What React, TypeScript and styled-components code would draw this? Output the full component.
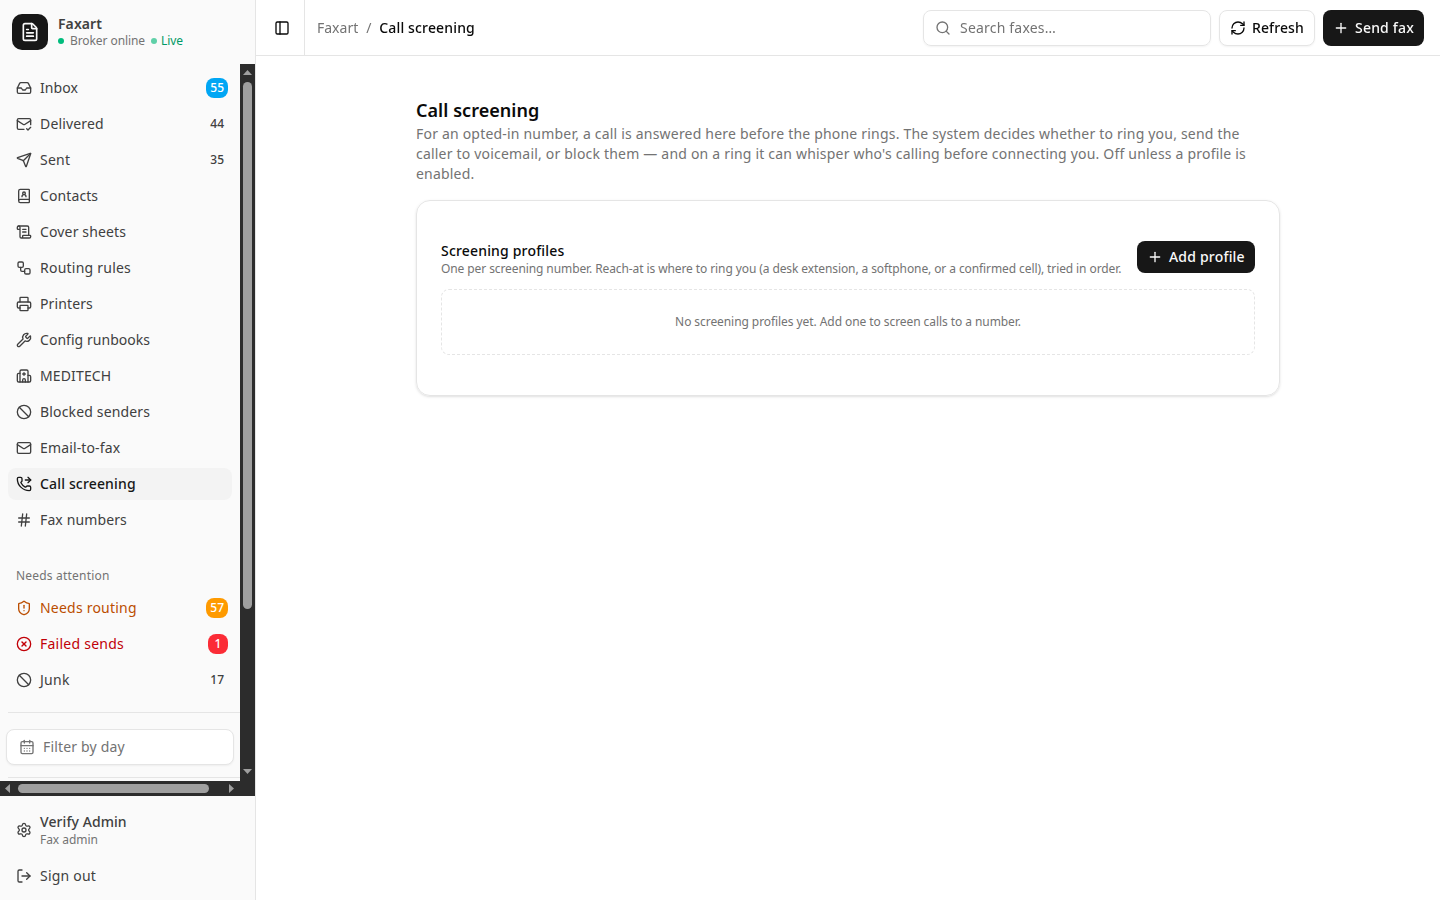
import React from "react";
import styled, { createGlobalStyle, css } from "styled-components";
import {
  Ban,
  BookUser,
  CalendarDays,
  CircleX,
  FileText,
  Hash,
  Hospital,
  Inbox,
  LogOut,
  Mail,
  MailCheck,
  PanelLeft,
  PhoneForwarded,
  Plus,
  Printer,
  RefreshCw,
  ScrollText,
  Search,
  Send,
  Settings,
  ShieldAlert,
  Workflow,
  Wrench,
  type LucideIcon,
} from "lucide-react";

const GlobalStyle = createGlobalStyle`
  *, *::before, *::after { box-sizing: border-box; }
  body {
    margin: 0;
    background: #fff;
    color: #0a0a0a;
    font-family: "Noto Sans", sans-serif;
    font-size: 14px;
    line-height: 20px;
  }
  button, input { font: inherit; color: inherit; letter-spacing: inherit; }
  h1, h2, p { margin: 0; }
  svg { flex-shrink: 0; }
`;

type Tone = "default" | "info" | "warning" | "danger";

const Shell = styled.div`
  display: grid;
  grid-template-columns: 256px minmax(0, 1fr);
  height: 100vh;
  overflow: hidden;
`;

const Sidebar = styled.aside`
  display: flex;
  flex-direction: column;
  min-height: 0;
  background: #fafafa;
  border-right: 1px solid #e5e5e5;
  color: #404040;
`;

const Brand = styled.div`
  display: flex;
  align-items: center;
  gap: 10px;
  height: 64px;
  padding: 0 12px;
`;

const BrandMark = styled.div`
  display: grid;
  place-items: center;
  width: 36px;
  height: 36px;
  border-radius: 10px;
  background: #171717;
  color: #fafafa;
`;

const BrandName = styled.div`
  font-weight: 600;
  line-height: 17.5px;
  letter-spacing: 0.08px;
`;

const StatusLine = styled.div`
  display: flex;
  align-items: center;
  font-size: 12px;
  line-height: 16px;
  letter-spacing: -0.08px;
  color: #737373;
`;

const StatusDot = styled.span<{ $faded?: boolean }>`
  width: 6px;
  height: 6px;
  margin-right: ${(p) => (p.$faded ? 4 : 6)}px;
  margin-left: ${(p) => (p.$faded ? 6 : 0)}px;
  border-radius: 50%;
  background: ${(p) => (p.$faded ? "#5fd0a8" : "#00bc7d")};
`;

const LiveText = styled.span`
  color: #009966;
`;

const ScrollFrame = styled.div`
  display: grid;
  grid-template-columns: minmax(0, 1fr) 15px;
  grid-template-rows: minmax(0, 1fr) 15px;
  flex: 1;
  min-height: 0;
`;

const ScrollContent = styled.nav`
  overflow: hidden;
`;

const ScrollTrack = styled.div<{ $horizontal?: boolean }>`
  display: flex;
  flex-direction: ${(p) => (p.$horizontal ? "row" : "column")};
  align-items: center;
  background: #2c2c2c;
`;

type Direction = "up" | "down" | "left" | "right";

const arrowPadding: Record<Direction, string> = {
  up: "6px 3px 7px",
  down: "6px 3px 7px",
  left: "3px 8px 3px 5px",
  right: "3px 6px 3px 7px",
};

const ArrowButton = styled.div<{ $to: Direction }>`
  display: flex;
  padding: ${(p) => arrowPadding[p.$to]};
`;

const Thumb = styled.div<{ $horizontal?: boolean }>`
  border-radius: 5px;
  background: #9f9f9f;
  ${(p) =>
    p.$horizontal
      ? css`width: 191px; height: 9px;`
      : css`width: 9px; height: 527px;`}
`;

const TrackRest = styled.div`
  flex: 1;
`;

const Corner = styled.div`
  background: #2c2c2c;
`;

const NavGroup = styled.div<{ $labelled?: boolean }>`
  display: flex;
  flex-direction: column;
  gap: 4px;
  padding: ${(p) => (p.$labelled ? "16px 8px" : "8px")};
`;

const GroupLabel = styled.div`
  display: flex;
  align-items: center;
  height: 32px;
  margin-bottom: -4px;
  padding: 0 8px;
  font-size: 12px;
  line-height: 16px;
  letter-spacing: 0.2px;
  color: #737373;
`;

const toneColor: Record<Tone, string> = {
  default: "inherit",
  info: "inherit",
  warning: "#bb4d00",
  danger: "#c10007",
};

const NavItem = styled.a<{ $active?: boolean; $tone?: Tone }>`
  display: flex;
  align-items: center;
  gap: 8px;
  height: 32px;
  padding: 0 4px 0 8px;
  border-radius: 8px;
  color: ${(p) => (p.$active ? "#171717" : toneColor[p.$tone ?? "default"])};
  background: ${(p) => (p.$active ? "#f3f3f3" : "transparent")};
  font-weight: ${(p) => (p.$active ? 500 : 400)};
`;

const NavLabel = styled.span<{ $tracking?: number }>`
  letter-spacing: ${(p) => p.$tracking ?? 0.1}px;
`;

const badgeFill: Record<Tone, string> = {
  default: "transparent",
  info: "#00a6f4",
  warning: "#fe9a00",
  danger: "#fb2c36",
};

const Badge = styled.span<{ $tone: Tone }>`
  display: flex;
  align-items: center;
  justify-content: center;
  min-width: 20px;
  height: 20px;
  margin-left: auto;
  padding: 0 4px;
  border-radius: 8px;
  background: ${(p) => badgeFill[p.$tone]};
  color: ${(p) => (p.$tone === "default" ? "#404040" : "#fff")};
  font-size: 12px;
  line-height: 16px;
  font-weight: 500;
  font-variant-numeric: tabular-nums;
`;

const Divider = styled.div`
  height: 1px;
  margin-left: 8px;
  background: #e5e5e5;
`;

const DayFilter = styled.button`
  display: flex;
  align-items: center;
  gap: 8px;
  width: 228px;
  height: 36px;
  margin: 16px 6px 12px;
  padding: 0 12px;
  border: 1px solid #e5e5e5;
  border-radius: 8px;
  background: #fff;
  box-shadow: 0 1px 2px rgba(0, 0, 0, 0.05);
  color: #737373;
  letter-spacing: 0.17px;
`;

const SidebarFooter = styled.div`
  display: flex;
  flex-direction: column;
  gap: 4px;
  height: 104px;
  padding: 8px;
`;

const UserRow = styled(NavItem)`
  height: 52px;
`;

const UserName = styled.div`
  font-weight: 500;
  line-height: 20px;
  letter-spacing: 0.08px;
`;

const UserRole = styled.div`
  font-size: 12px;
  line-height: 16px;
  letter-spacing: -0.05px;
  color: #737373;
`;

const Main = styled.div`
  display: flex;
  flex-direction: column;
  min-width: 0;
`;

const TopBar = styled.header`
  display: flex;
  align-items: center;
  height: 56px;
  padding-right: 16px;
  border-bottom: 1px solid #e5e5e5;
  will-change: transform;
`;

const PanelToggle = styled.div`
  display: flex;
  align-items: center;
  align-self: stretch;
  width: 49px;
  padding-left: 18px;
  border-right: 1px solid #e5e5e5;
`;

const Crumbs = styled.div`
  display: flex;
  gap: 8px;
  margin-left: 12px;
  color: #737373;
`;

const CrumbSeparator = styled.span`
  width: 5px;
`;

const CrumbCurrent = styled.span`
  color: #0a0a0a;
  font-weight: 500;
  letter-spacing: 0.16px;
`;

const Actions = styled.div`
  display: flex;
  gap: 8px;
  margin-left: auto;
`;

const SearchBox = styled.label`
  display: flex;
  align-items: center;
  gap: 9px;
  width: 288px;
  height: 36px;
  padding: 0 11px;
  border: 1px solid #e5e5e5;
  border-radius: 8px;
  box-shadow: 0 1px 2px rgba(0, 0, 0, 0.05);
  color: #737373;
  letter-spacing: 0.2px;
`;

const SearchInput = styled.input`
  flex: 1;
  min-width: 0;
  padding: 0;
  border: 0;
  outline: 0;
  background: transparent;
  &::placeholder { color: #737373; opacity: 1; }
`;

const Button = styled.button<{ $primary?: boolean; $width: number }>`
  display: inline-flex;
  align-items: center;
  gap: 6px;
  flex-shrink: 0;
  width: ${(p) => p.$width}px;
  height: 36px;
  padding: 0 10px;
  border: ${(p) => (p.$primary ? "0" : "1px solid #e5e5e5")};
  border-radius: 8px;
  background: ${(p) => (p.$primary ? "#171717" : "#fff")};
  color: ${(p) => (p.$primary ? "#fafafa" : "#0a0a0a")};
  box-shadow: ${(p) => (p.$primary ? "none" : "0 1px 2px rgba(0, 0, 0, 0.05)")};
  font-weight: 500;
  letter-spacing: ${(p) => (p.$primary ? 0.2 : 0.1)}px;
  white-space: nowrap;
`;

const CompactButton = styled(Button)`
  height: 32px;
`;

const Page = styled.main`
  width: 864px;
  margin: 44px auto 0;
`;

const PageTitle = styled.h1`
  margin-bottom: 4px;
  font-size: 18px;
  line-height: 20px;
  font-weight: 600;
  letter-spacing: 0.05px;
`;

const PageIntro = styled.p`
  color: #737373;
  letter-spacing: 0.198px;
`;

const Card = styled.section`
  display: flex;
  flex-direction: column;
  gap: 16px;
  height: 196px;
  margin-top: 16px;
  padding: 40px 24px;
  border: 1px solid #e5e5e5;
  border-radius: 14px;
  box-shadow: 0 1px 3px rgba(0, 0, 0, 0.1), 0 1px 2px -1px rgba(0, 0, 0, 0.1);
`;

const CardHead = styled.div`
  display: flex;
  justify-content: space-between;
  height: 32px;
`;

const CardTitle = styled.h2`
  font-size: 14px;
  line-height: 20px;
  font-weight: 500;
  letter-spacing: 0.18px;
`;

const CardNote = styled.p`
  font-size: 12px;
  line-height: 16px;
  letter-spacing: -0.096px;
  color: #737373;
`;

const EmptyState = styled.div`
  display: grid;
  place-items: center;
  flex-shrink: 0;
  height: 66px;
  border: 1px dashed #e5e5e5;
  border-radius: 8px;
  font-size: 12px;
  line-height: 16px;
  letter-spacing: -0.07px;
  color: #737373;
`;

interface NavEntry {
  label: string;
  icon: LucideIcon;
  count?: number;
  tone?: Tone;
  active?: boolean;
  tracking?: number;
}

const mainNav: NavEntry[] = [
  { label: "Inbox", icon: Inbox, count: 55, tone: "info" },
  { label: "Delivered", icon: MailCheck, count: 44, tracking: 0.16 },
  { label: "Sent", icon: Send, count: 35, tracking: 0.25 },
  { label: "Contacts", icon: BookUser },
  { label: "Cover sheets", icon: ScrollText, tracking: 0.15 },
  { label: "Routing rules", icon: Workflow, tracking: 0.23 },
  { label: "Printers", icon: Printer, tracking: 0.12 },
  { label: "Config runbooks", icon: Wrench, tracking: 0.04 },
  { label: "MEDITECH", icon: Hospital, tracking: 0.13 },
  { label: "Blocked senders", icon: Ban, tracking: 0.16 },
  { label: "Email-to-fax", icon: Mail, tracking: 0.14 },
  { label: "Call screening", icon: PhoneForwarded, active: true, tracking: 0.16 },
  { label: "Fax numbers", icon: Hash, tracking: 0.12 },
];

const attentionNav: NavEntry[] = [
  { label: "Needs routing", icon: ShieldAlert, count: 57, tone: "warning", tracking: 0.22 },
  { label: "Failed sends", icon: CircleX, count: 1, tone: "danger", tracking: 0.25 },
  { label: "Junk", icon: Ban, count: 17, tracking: 0.25 },
];

function NavRow({ label, icon: Icon, count, tone = "default", active, tracking }: NavEntry) {
  return (
    <NavItem $active={active} $tone={tone}>
      <Icon size={16} />
      <NavLabel $tracking={tracking}>{label}</NavLabel>
      {count !== undefined && <Badge $tone={tone}>{count}</Badge>}
    </NavItem>
  );
}

const arrowPoints: Record<Direction, string> = {
  up: "0,5 4.5,0 9,5",
  down: "0,0 9,0 4.5,5",
  left: "5,0 5,9 0,4.5",
  right: "0,0 5,4.5 0,9",
};

function ScrollArrow({ to }: { to: Direction }) {
  const horizontal = to === "left" || to === "right";
  return (
    <ArrowButton $to={to}>
      <svg width={horizontal ? 5 : 9} height={horizontal ? 9 : 5}>
        <polygon points={arrowPoints[to]} fill="#9f9f9f" />
      </svg>
    </ArrowButton>
  );
}

export default function App() {
  return (
    <>
      <GlobalStyle />
      <Shell>
        <Sidebar>
          <Brand>
            <BrandMark>
              <FileText size={20} />
            </BrandMark>
            <div>
              <BrandName>Faxart</BrandName>
              <StatusLine>
                <StatusDot />
                Broker online
                <StatusDot $faded />
                <LiveText>Live</LiveText>
              </StatusLine>
            </div>
          </Brand>
          <ScrollFrame>
            <ScrollContent>
              <NavGroup>
                {mainNav.map((entry) => (
                  <NavRow key={entry.label} {...entry} />
                ))}
              </NavGroup>
              <NavGroup $labelled>
                <GroupLabel>Needs attention</GroupLabel>
                {attentionNav.map((entry) => (
                  <NavRow key={entry.label} {...entry} />
                ))}
              </NavGroup>
              <Divider />
              <DayFilter>
                <CalendarDays size={16} />
                Filter by day
              </DayFilter>
              <Divider />
            </ScrollContent>
            <ScrollTrack>
              <ScrollArrow to="up" />
              <Thumb />
              <TrackRest />
              <ScrollArrow to="down" />
            </ScrollTrack>
            <ScrollTrack $horizontal>
              <ScrollArrow to="left" />
              <Thumb $horizontal />
              <TrackRest />
              <ScrollArrow to="right" />
            </ScrollTrack>
            <Corner />
          </ScrollFrame>
          <SidebarFooter>
            <UserRow>
              <Settings size={16} />
              <div>
                <UserName>Verify Admin</UserName>
                <UserRole>Fax admin</UserRole>
              </div>
            </UserRow>
            <NavItem>
              <LogOut size={16} />
              <NavLabel $tracking={0.22}>Sign out</NavLabel>
            </NavItem>
          </SidebarFooter>
        </Sidebar>
        <Main>
          <TopBar>
            <PanelToggle>
              <PanelLeft size={16} />
            </PanelToggle>
            <Crumbs>
              <span>Faxart</span>
              <CrumbSeparator>/</CrumbSeparator>
              <CrumbCurrent>Call screening</CrumbCurrent>
            </Crumbs>
            <Actions>
              <SearchBox>
                <Search size={16} />
                <SearchInput placeholder="Search faxes…" />
              </SearchBox>
              <Button $width={96}>
                <RefreshCw size={16} />
                Refresh
              </Button>
              <Button $primary $width={101}>
                <Plus size={16} />
                Send fax
              </Button>
            </Actions>
          </TopBar>
          <Page>
            <PageTitle>Call screening</PageTitle>
            <PageIntro>
              For an opted-in number, a call is answered here before the phone rings. The system
              decides whether to ring you, send the caller to voicemail, or block them — and on a
              ring it can whisper who's calling before connecting you. Off unless a profile is
              enabled.
            </PageIntro>
            <Card>
              <CardHead>
                <div>
                  <CardTitle>Screening profiles</CardTitle>
                  <CardNote>
                    One per screening number. Reach-at is where to ring you (a desk extension, a
                    softphone, or a confirmed cell), tried in order.
                  </CardNote>
                </div>
                <CompactButton $primary $width={118}>
                  <Plus size={16} />
                  Add profile
                </CompactButton>
              </CardHead>
              <EmptyState>No screening profiles yet. Add one to screen calls to a number.</EmptyState>
            </Card>
          </Page>
        </Main>
      </Shell>
    </>
  );
}
